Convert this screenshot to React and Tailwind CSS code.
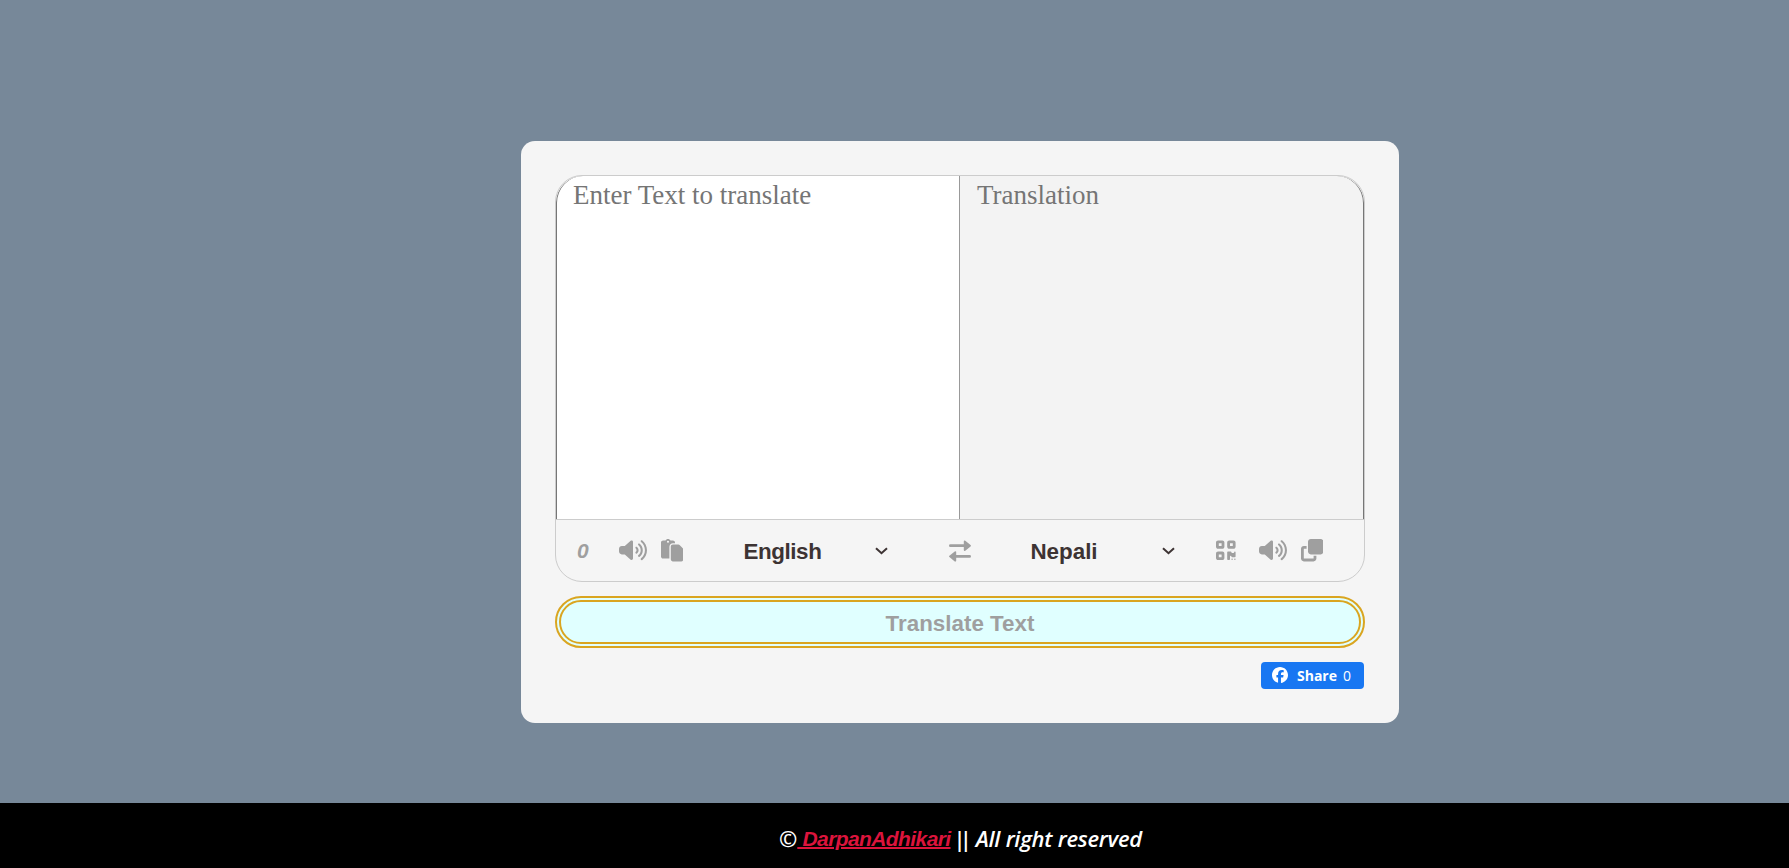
import { FaVolumeHigh, FaPaste, FaQrcode, FaClone, FaFacebook } from "react-icons/fa6";

const pane = "h-[344px] resize-none border-0 outline-none pr-4 pt-[3px] font-['Liberation_Serif',serif] text-[27px] leading-[33px] placeholder:text-[#757575] placeholder:opacity-100";

function Chevron() {
  return (
    <svg className="mt-px h-[8px] w-[13px]" viewBox="0 0 13 8" fill="none" stroke="#3d3333" strokeWidth="2">
      <path d="M1 1.2 6.5 6.2 12 1.2" />
    </svg>
  );
}

function SwapArrows() {
  return (
    <svg className="h-[22px] w-[22px]" viewBox="0 0 22 22" fill="currentColor" stroke="currentColor" strokeLinejoin="round">
      <path strokeWidth="2.8" strokeLinecap="round" fill="none" d="M1.4 5.7H17M20.6 16.4H5" />
      <path strokeWidth="1.8" d="M15.7 1.4v8.6L21 5.7ZM6.3 12.1v8.6L1 16.4Z" />
    </svg>
  );
}

export default function App() {
  return (
    <div className="flex h-[868px] w-full flex-col overflow-hidden bg-[#778899] font-['Liberation_Sans',sans-serif]">
      <main className="flex-1 pl-[521px] pt-[141px]">
        <section className="flex h-[582px] w-[878px] flex-col rounded-[14px] bg-[#f5f5f5] p-[34px]">
          <div className="flex h-[407px] w-[810px] flex-col overflow-hidden rounded-[27px] border border-[#ccc]">
            <div className="flex h-[343px]">
              <textarea className={`${pane} w-[403px] rounded-tl-[27px] border-l border-[#767676] bg-white pl-4`} placeholder="Enter Text to translate" />
              <textarea readOnly className={`${pane} w-[405px] rounded-tr-[27px] border-x border-r-[#767676] border-l-[#999] bg-[#f3f3f3] pl-[17px]`} placeholder="Translation" />
            </div>
            <div className="flex h-[62px] shrink-0 items-center border-t border-[#ccc] text-[22.4px] text-[#9f9f9f]">
              <span className="ml-[21px] mt-px w-[42px] text-[21px] font-bold italic">0</span>
              <FaVolumeHigh className="h-[22.4px] w-[28px]" />
              <FaPaste className="ml-[14px]" />
              <div className="ml-[60px] flex w-[145px] items-center justify-between font-bold text-[#3d3333]">
                <span className="mt-[2px] text-[22.4px] tracking-[-0.4px]">English</span>
                <Chevron />
              </div>
              <span className="ml-[61px] w-[22px]"><SwapArrows /></span>
              <div className="ml-[59px] flex w-[145px] items-center justify-between font-bold text-[#3d3333]">
                <span className="mt-[2px] text-[22.4px]">Nepali</span>
                <Chevron />
              </div>
              <FaQrcode className="ml-[41px] h-[22.4px] w-[19.6px]" />
              <FaVolumeHigh className="ml-[23px] h-[22.4px] w-[28px]" />
              <FaClone className="ml-[14px]" />
            </div>
          </div>
          <button className="mt-[14px] flex h-[52px] w-[810px] items-center justify-center rounded-[27px] border-[6px] border-double border-[#daa520] bg-[#e0ffff] text-[22.4px] font-bold text-[#9f9f9f]">
            <span className="mt-[3px]">Translate Text</span>
          </button>
          <button className="mr-px mt-[14px] flex h-[27px] w-[103px] items-center self-end rounded-[4px] bg-[#1877f2] font-['Open_Sans',sans-serif] text-[14px] leading-none text-white">
            <FaFacebook className="mb-[2px] ml-[11px] h-4 w-4" />
            <span className="ml-[9px] font-bold">Share</span>
            <span className="ml-[6px]">0</span>
          </button>
        </section>
      </main>
      <footer className="flex h-[65px] shrink-0 items-center bg-black pl-[779px] pt-[5px] font-['Open_Sans',sans-serif] text-[22px] font-semibold text-white">
        <span>©</span>
        <a className="mt-[2px] whitespace-pre font-['Liberation_Sans',sans-serif] text-[21px] font-bold italic tracking-[-0.6px] text-[#dc143c] underline decoration-2"> DarpanAdhikari</a>
        <span className="ml-[3px] tracking-[-6px]">||</span>
        <span className="ml-[10px] italic tracking-[-0.25px]">All right reserved</span>
      </footer>
    </div>
  );
}
